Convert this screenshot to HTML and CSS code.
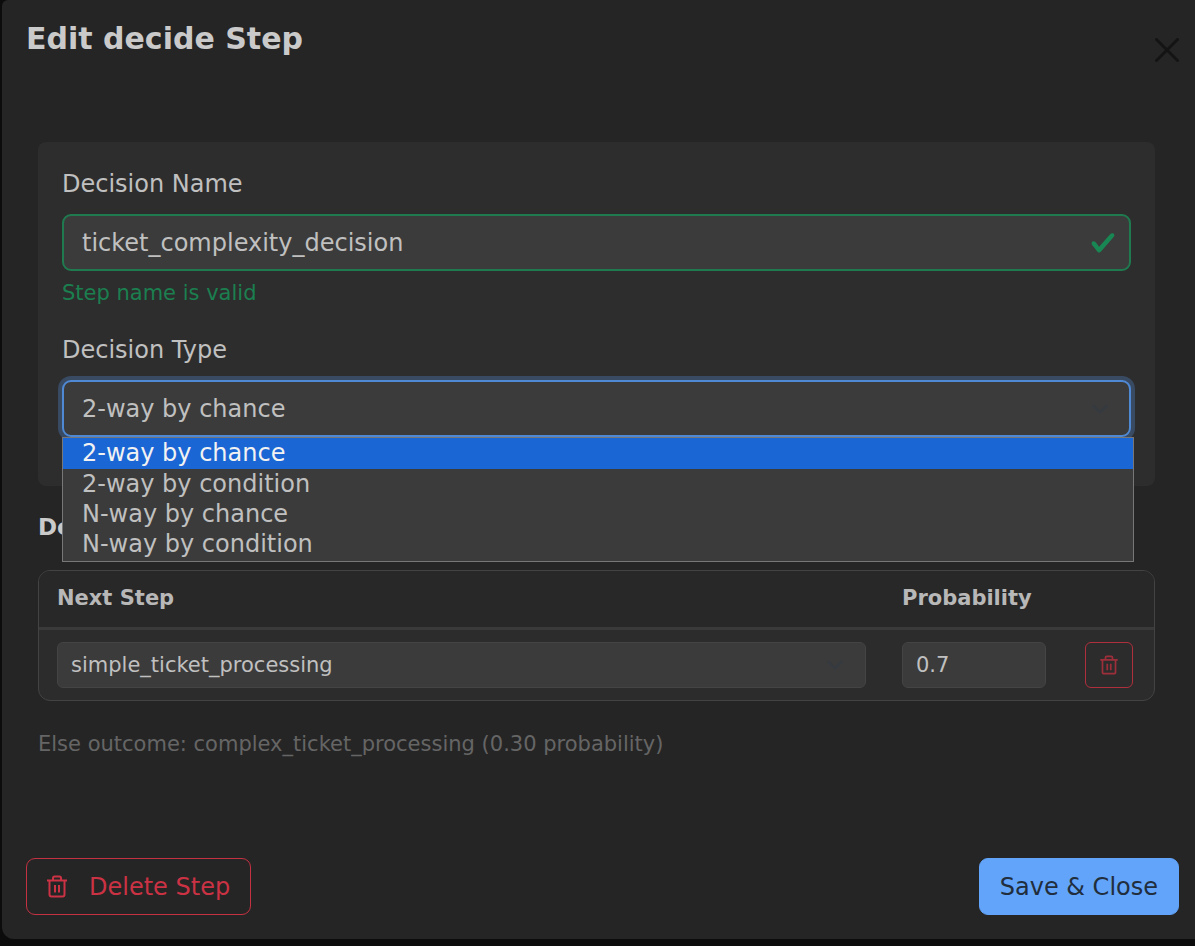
FILE: index.html
```html
<!DOCTYPE html>
<html lang="en">
<head>
<meta charset="utf-8">
<title>Edit decide Step</title>
<link rel="stylesheet" href="styles.css">
</head>
<body>
<div class="modal" role="dialog" aria-labelledby="title">
  <header class="modal-header">
    <h1 class="title" id="title">Edit decide Step</h1>
    <button class="close" type="button" aria-label="Close">
      <svg viewBox="0 0 24 24" width="24" height="24"><path d="M1.500 1.500 22.500 22.500M22.500 1.500 1.500 22.500" fill="none" stroke="currentColor" stroke-width="3" stroke-linecap="round"/></svg>
    </button>
  </header>
  <main class="modal-body">
    <section class="card">
      <label class="label" for="name">Decision Name</label>
      <div class="field">
        <input class="control valid" id="name" type="text" value="ticket_complexity_decision">
        <svg class="tick" viewBox="0 0 8 8" width="26" height="26"><path fill="currentColor" d="M2.300 6.730.6 4.530c-.4-1.040.46-1.400 1.100-.8l1.100 1.400 3.400-3.800c.6-.63 1.600-.27 1.200.7l-4 4.600c-.43.5-.8.4-1.100.1z"/></svg>
      </div>
      <p class="feedback">Step name is valid</p>
      <label class="label" for="type">Decision Type</label>
      <div class="field">
        <select class="control focused" id="type">
          <option>2-way by chance</option>
          <option>2-way by condition</option>
          <option>N-way by chance</option>
          <option>N-way by condition</option>
        </select>
        <svg class="chevron" viewBox="0 0 16 16" width="18" height="18"><path d="m2 5 6 6 6-6" fill="none" stroke="currentColor" stroke-width="2" stroke-linecap="round" stroke-linejoin="round"/></svg>
        <ul class="options">
          <li class="option selected">2-way by chance</li>
          <li class="option">2-way by condition</li>
          <li class="option">N-way by chance</li>
          <li class="option">N-way by condition</li>
        </ul>
      </div>
    </section>
    <h2 class="section-title">Decision Outcomes</h2>
    <table class="outcomes">
      <thead>
        <tr><th>Next Step</th><th class="col-probability">Probability</th><th class="col-action"></th></tr>
      </thead>
      <tbody>
        <tr>
          <td>
            <div class="field">
              <select class="control small" aria-label="Next Step"><option>simple_ticket_processing</option></select>
              <svg class="chevron" viewBox="0 0 16 16" width="18" height="18"><path d="m2 5 6 6 6-6" fill="none" stroke="currentColor" stroke-width="2" stroke-linecap="round" stroke-linejoin="round"/></svg>
            </div>
          </td>
          <td><input class="control small" type="text" inputmode="decimal" aria-label="Probability" value="0.7"></td>
          <td class="action">
            <button class="remove" type="button" aria-label="Delete outcome">
              <svg viewBox="0 0 20 23" width="18" height="20"><g fill="none" stroke="currentColor" stroke-width="2" stroke-linejoin="round"><path d="M0 5.500h20M2.500 5.500v14q0 2 2 2h11q2 0 2-2v-14M6 5V3q0-1.500 1.500-1.500h5Q14 1.500 14 3v2"/><path d="M8 10v7.500M12 10v7.500"/></g></svg>
            </button>
          </td>
        </tr>
      </tbody>
    </table>
    <p class="else">Else outcome: complex_ticket_processing (0.30 probability)</p>
  </main>
  <footer class="modal-footer">
    <button class="button danger" type="button">
      <svg viewBox="0 0 20 23" width="20" height="23"><g fill="none" stroke="currentColor" stroke-width="2" stroke-linejoin="round"><path d="M0 5.500h20M2.500 5.500v14q0 2 2 2h11q2 0 2-2v-14M6 5V3q0-1.500 1.500-1.500h5Q14 1.500 14 3v2"/><path d="M8 10v7.500M12 10v7.500"/></g></svg>
      Delete Step
    </button>
    <button class="button primary" type="button">Save &amp; Close</button>
  </footer>
</div>
</body>
</html>
```
FILE: styles.css
```css
* { box-sizing: border-box; }
body {
  margin: 0;
  min-height: 100vh;
  display: flex;
  flex-direction: column;
  background: #0c0c0c;
  color: #c0c0c0;
  font-family: "DejaVu Sans", sans-serif;
  font-size: 24px;
  line-height: 36px;
}
button, input, select { font: inherit; }
svg { display: block; flex: none; }
.modal {
  flex: 1;
  display: flex;
  flex-direction: column;
  margin: 0 0 7px 2px;
  background: #252525;
  border-radius: 6px 0 0 12px;
}
.modal-header {
  display: flex;
  justify-content: space-between;
  padding: 20px 16px 0 24px;
}
.title { margin: 0; font-size: 30px; line-height: 38px; color: #cacaca; }
.close { margin-top: 18px; padding: 0; border: 0; background: none; color: #141414; align-self: flex-start; }
.modal-body { flex: 1; padding: 80px 40px 0 36px; }
.card { padding: 24px 24px 49px; border-radius: 8px; background: #2d2d2d; }
.label { display: block; margin-bottom: 12px; }
.field { position: relative; }
.control {
  display: block;
  width: 100%;
  height: 57px;
  padding: 0 18px;
  border: 2px solid #444;
  border-radius: 9px;
  outline: 0;
  background: #3b3b3b;
  color: #c0c0c0;
  appearance: none;
}
.valid { border-color: #1f7a4f; }
.focused { border-color: #5089d3; box-shadow: 0 0 0 4px #394a63; }
.small { height: 46px; padding: 0 13px; border-width: 1px; border-radius: 6px; font-size: 21px; }
.tick { position: absolute; right: 15px; top: 16px; color: #198754; }
.chevron { position: absolute; right: 22px; top: 50%; margin-top: -9px; color: #343a40; pointer-events: none; }
.feedback { margin: 6px 0 23px; font-size: 21px; line-height: 32px; color: #1b7f50; }
.options {
  position: absolute;
  z-index: 1;
  top: 100%;
  left: 0;
  right: -3px;
  margin: 0;
  padding: 0 0 2px;
  border: 1px solid #777;
  background: #3b3b3b;
  list-style: none;
}
.option { padding: 0 19px; line-height: 30px; }
.selected { padding-bottom: 1px; background: #1a66d5; color: #f2f2f2; }
.section-title { margin: 23px 0 25px; font-size: 23px; line-height: 36px; color: #cacaca; }
.outcomes {
  width: 100%;
  table-layout: fixed;
  border: 1px solid #434343;
  border-radius: 12px;
  border-spacing: 0;
  overflow: hidden;
  background: #2c2c2c;
  font-size: 21px;
}
.outcomes th {
  height: 59px;
  padding: 0 18px 2px;
  border-bottom: 3px solid #3a3a3a;
  background: #282828;
  color: #b8b8b8;
  line-height: 32px;
  text-align: left;
}
.outcomes td { padding: 12px 18px; }
.outcomes .col-probability { width: 180px; }
.outcomes .col-action { width: 90px; }
.outcomes .action { padding: 12px 0; }
.remove {
  display: flex;
  align-items: center;
  justify-content: center;
  width: 48px;
  height: 46px;
  margin: 0 auto;
  padding: 0;
  border: 1px solid #b02f3d;
  border-radius: 6px;
  background: none;
  color: #9d2f3a;
}
.else { margin: 27px 0 0; font-size: 21px; line-height: 32px; color: #656565; }
.modal-footer { display: flex; justify-content: space-between; padding: 24px 16px 24px 24px; }
.button {
  display: flex;
  align-items: center;
  gap: 22px;
  height: 57px;
  padding: 0 20px;
  border: 1px solid #c43142;
  border-radius: 9px;
  background: none;
}
.danger { color: #cb3244; }
.primary { border-color: #62a4fa; background: #62a4fa; color: #212e3d; }
```
